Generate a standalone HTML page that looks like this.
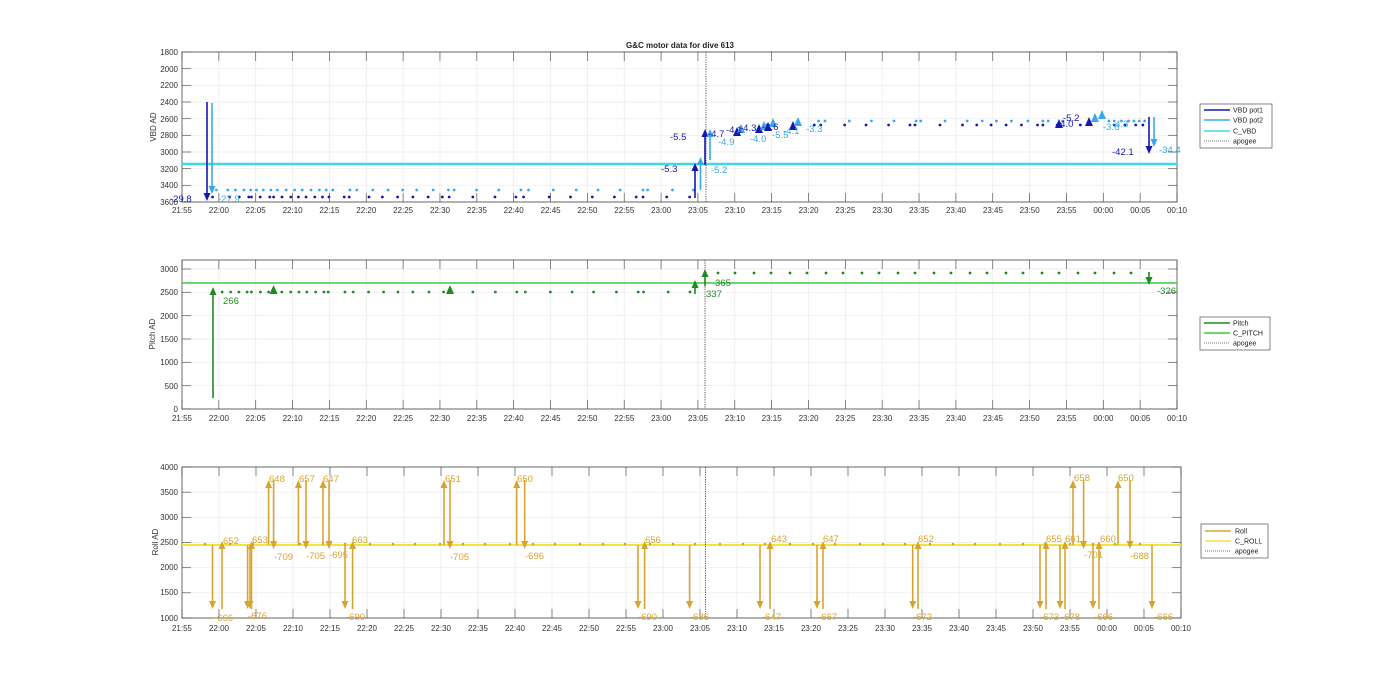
<!DOCTYPE html>
<html><head><meta charset="utf-8"><style>
html,body{margin:0;padding:0;background:#fff;width:1400px;height:693px;overflow:hidden}
svg{display:block;font-family:"Liberation Sans",sans-serif}
.t{font-size:8px;fill:#333}
.l{font-size:9.5px}
</style></head><body>
<svg id="s" width="1400" height="693" viewBox="0 0 1400 693" xmlns="http://www.w3.org/2000/svg">
<rect width="1400" height="693" fill="#fff"/>
<g id="grid"></g>
<g id="data"></g>
<text x="680" y="48" text-anchor="middle" font-size="8" font-weight="bold" fill="#222">G&amp;C motor data for dive 613</text>
<text class="t" transform="translate(156,127) rotate(-90)" text-anchor="middle" font-size="8.5">VBD AD</text>
<text class="t" transform="translate(155,334) rotate(-90)" text-anchor="middle" font-size="8.5">Pitch AD</text>
<text class="t" transform="translate(158,542) rotate(-90)" text-anchor="middle" font-size="8.5">Roll AD</text>
<g class="t" text-anchor="end">
<text x="178" y="55">1800</text><text x="178" y="72">2000</text><text x="178" y="88">2200</text><text x="178" y="105">2400</text><text x="178" y="122">2600</text><text x="178" y="138">2800</text><text x="178" y="155">3000</text><text x="178" y="172">3200</text><text x="178" y="188">3400</text><text x="178" y="205">3600</text>
<text x="178" y="272">3000</text><text x="178" y="295">2500</text><text x="178" y="319">2000</text><text x="178" y="342">1500</text><text x="178" y="365">1000</text><text x="178" y="389">500</text><text x="178" y="412">0</text>
<text x="178" y="470">4000</text><text x="178" y="495">3500</text><text x="178" y="520">3000</text><text x="178" y="545">2500</text><text x="178" y="570">2000</text><text x="178" y="595">1500</text><text x="178" y="621">1000</text>
</g>
<text class="t" y="213" text-anchor="middle"><tspan x="182">21:55</tspan><tspan x="218.9">22:00</tspan><tspan x="255.7">22:05</tspan><tspan x="292.6">22:10</tspan><tspan x="329.4">22:15</tspan><tspan x="366.3">22:20</tspan><tspan x="403.1">22:25</tspan><tspan x="440">22:30</tspan><tspan x="476.9">22:35</tspan><tspan x="513.7">22:40</tspan><tspan x="550.6">22:45</tspan><tspan x="587.4">22:50</tspan><tspan x="624.3">22:55</tspan><tspan x="661.1">23:00</tspan><tspan x="698">23:05</tspan><tspan x="734.9">23:10</tspan><tspan x="771.7">23:15</tspan><tspan x="808.6">23:20</tspan><tspan x="845.4">23:25</tspan><tspan x="882.3">23:30</tspan><tspan x="919.1">23:35</tspan><tspan x="956">23:40</tspan><tspan x="992.9">23:45</tspan><tspan x="1029.7">23:50</tspan><tspan x="1066.6">23:55</tspan><tspan x="1103.4">00:00</tspan><tspan x="1140.3">00:05</tspan><tspan x="1177">00:10</tspan></text>
<text class="t" y="421" text-anchor="middle"><tspan x="182">21:55</tspan><tspan x="218.9">22:00</tspan><tspan x="255.7">22:05</tspan><tspan x="292.6">22:10</tspan><tspan x="329.4">22:15</tspan><tspan x="366.3">22:20</tspan><tspan x="403.1">22:25</tspan><tspan x="440">22:30</tspan><tspan x="476.9">22:35</tspan><tspan x="513.7">22:40</tspan><tspan x="550.6">22:45</tspan><tspan x="587.4">22:50</tspan><tspan x="624.3">22:55</tspan><tspan x="661.1">23:00</tspan><tspan x="698">23:05</tspan><tspan x="734.9">23:10</tspan><tspan x="771.7">23:15</tspan><tspan x="808.6">23:20</tspan><tspan x="845.4">23:25</tspan><tspan x="882.3">23:30</tspan><tspan x="919.1">23:35</tspan><tspan x="956">23:40</tspan><tspan x="992.9">23:45</tspan><tspan x="1029.7">23:50</tspan><tspan x="1066.6">23:55</tspan><tspan x="1103.4">00:00</tspan><tspan x="1140.3">00:05</tspan><tspan x="1177">00:10</tspan></text>
<text class="t" y="631" text-anchor="middle"><tspan x="182">21:55</tspan><tspan x="219">22:00</tspan><tspan x="256">22:05</tspan><tspan x="293">22:10</tspan><tspan x="330">22:15</tspan><tspan x="367">22:20</tspan><tspan x="404">22:25</tspan><tspan x="441">22:30</tspan><tspan x="478">22:35</tspan><tspan x="515">22:40</tspan><tspan x="552">22:45</tspan><tspan x="589">22:50</tspan><tspan x="626">22:55</tspan><tspan x="663">23:00</tspan><tspan x="700">23:05</tspan><tspan x="737">23:10</tspan><tspan x="774">23:15</tspan><tspan x="811">23:20</tspan><tspan x="848">23:25</tspan><tspan x="885">23:30</tspan><tspan x="922">23:35</tspan><tspan x="959">23:40</tspan><tspan x="996">23:45</tspan><tspan x="1033">23:50</tspan><tspan x="1070">23:55</tspan><tspan x="1107">00:00</tspan><tspan x="1144">00:05</tspan><tspan x="1181">00:10</tspan></text>

<g class="l">
<text x="170" y="202" fill="#1418b0">-29.8</text>
<text x="218" y="202" fill="#3aa8e8">-27.9</text>
<text x="661" y="172" fill="#1418b0">-5.3</text>
<text x="711" y="173" fill="#3aa8e8">-5.2</text>
<text x="670" y="140" fill="#1418b0">-5.5</text>
<text x="708" y="137" fill="#1418b0">-4.7</text>
<text x="718" y="145" fill="#3aa8e8">-4.9</text>
<text x="726" y="133" fill="#1418b0">-4.1</text>
<text x="740" y="131" fill="#1418b0">-4.3</text>
<text x="750" y="142" fill="#3aa8e8">-4.0</text>
<text x="762" y="130" fill="#1418b0">-3.6</text>
<text x="772" y="138" fill="#3aa8e8">-5.5</text>
<text x="783" y="134" fill="#3aa8e8">-4.1</text>
<text x="806" y="132" fill="#3aa8e8">-3.3</text>
<text x="1057" y="127" fill="#1418b0">-4.0</text>
<text x="1063" y="121" fill="#1418b0">-5.2</text>
<text x="1103" y="130" fill="#3aa8e8">-3.6</text>
<text x="1112" y="127" fill="#3aa8e8">-4.3</text>
<text x="1112" y="155" fill="#1418b0">-42.1</text>
<text x="1159" y="153" fill="#3aa8e8">-34.4</text>
</g>
<g class="l" fill="#1f8a1f">
<text x="223" y="304">266</text>
<text x="706" y="297">337</text>
<text x="715" y="286">365</text>
<text x="1157" y="294">-326</text>
</g>
<g class="l" fill="#d6a531">
<text x="214" y="621">-666</text><text x="223" y="544">652</text>
<text x="248" y="619">-676</text><text x="252" y="543">653</text>
<text x="269" y="482">648</text><text x="274" y="560">-709</text>
<text x="299" y="482">657</text><text x="306" y="559">-705</text>
<text x="323" y="482">647</text><text x="329" y="558">-695</text>
<text x="346" y="620">-690</text><text x="352" y="543">663</text>
<text x="445" y="482">651</text><text x="450" y="560">-705</text>
<text x="517" y="482">650</text><text x="525" y="559">-696</text>
<text x="638" y="620">-690</text><text x="645" y="543">656</text>
<text x="690" y="620">-686</text>
<text x="762" y="620">-647</text><text x="771" y="542">643</text>
<text x="818" y="620">-667</text><text x="823" y="542">647</text>
<text x="913" y="620">-672</text><text x="918" y="542">652</text>
<text x="1040" y="620">-673</text><text x="1046" y="542">655</text>
<text x="1061" y="620">-678</text><text x="1065" y="542">661</text>
<text x="1074" y="481">658</text><text x="1084" y="558">-701</text>
<text x="1094" y="620">-666</text><text x="1100" y="542">660</text>
<text x="1118" y="481">650</text><text x="1130" y="559">-688</text>
<text x="1154" y="620">-666</text>
</g>
<g font-size="7" fill="#222">
<rect x="1200" y="104" width="72" height="44" fill="#fff" stroke="#333" stroke-width="0.6"/>
<line x1="1204" y1="110" x2="1230" y2="110" stroke="#1418b0" stroke-width="1.5"/><text x="1233" y="112.5">VBD pot1</text>
<line x1="1204" y1="120" x2="1230" y2="120" stroke="#3aa8e8" stroke-width="1.5"/><text x="1233" y="122.5">VBD pot2</text>
<line x1="1204" y1="131" x2="1230" y2="131" stroke="#40d8e8" stroke-width="1.5"/><text x="1233" y="133.5">C_VBD</text>
<line x1="1204" y1="141" x2="1230" y2="141" stroke="#444" stroke-width="0.8" stroke-dasharray="1,1"/><text x="1233" y="143.5">apogee</text>
<rect x="1200" y="317" width="70" height="33" fill="#fff" stroke="#333" stroke-width="0.6"/>
<line x1="1204" y1="323" x2="1230" y2="323" stroke="#1f8a1f" stroke-width="1.5"/><text x="1233" y="325.5">Pitch</text>
<line x1="1204" y1="333" x2="1230" y2="333" stroke="#3ccc3c" stroke-width="1.5"/><text x="1233" y="335.5">C_PITCH</text>
<line x1="1204" y1="343" x2="1230" y2="343" stroke="#444" stroke-width="0.8" stroke-dasharray="1,1"/><text x="1233" y="345.5">apogee</text>
<rect x="1201" y="524" width="67" height="34" fill="#fff" stroke="#333" stroke-width="0.6"/>
<line x1="1205" y1="531" x2="1231" y2="531" stroke="#d6a531" stroke-width="1.5"/><text x="1235" y="533.5">Roll</text>
<line x1="1205" y1="541" x2="1231" y2="541" stroke="#f2e43c" stroke-width="1.5"/><text x="1235" y="543.5">C_ROLL</text>
<line x1="1205" y1="551" x2="1231" y2="551" stroke="#444" stroke-width="0.8" stroke-dasharray="1,1"/><text x="1235" y="553.5">apogee</text>
</g>
</svg>
<script>
(function(){
var NS="http://www.w3.org/2000/svg",G=document.getElementById('grid'),D=document.getElementById('data');
function el(p,n,a){var e=document.createElementNS(NS,n);for(var k in a)e.setAttribute(k,a[k]);p.appendChild(e);return e;}
function ln(p,x1,y1,x2,y2,c,w,extra){var a={x1:x1,y1:y1,x2:x2,y2:y2,stroke:c,'stroke-width':w};for(var k in extra)a[k]=extra[k];return el(p,'line',a);}
var axes=[{l:182,r:1177,t:52,b:202,ys:[52,68.7,85.3,102,118.7,135.3,152,168.7,185.3,202]},
{l:182,r:1177,t:260,b:409,ys:[269,292.3,315.7,339,362.3,385.7,409]},
{l:182,r:1181,t:467,b:618,ys:[467,492.2,517.3,542.5,567.7,592.8,618]}];
axes.forEach(function(a){
 var st=(a.r-a.l)/27;
 for(var i=1;i<27;i++){var x=a.l+i*st;ln(G,x,a.t,x,a.b,'#e9e9e9',0.7);}
 a.ys.forEach(function(y){ln(G,a.l,y,a.r,y,'#e9e9e9',0.7);});
 for(var i=0;i<=27;i++){var x=a.l+i*st;ln(G,x,a.b,x,a.b-9,'#555',0.7);ln(G,x,a.t,x,a.t+9,'#555',0.7);}
 a.ys.forEach(function(y){ln(G,a.l,y,a.l+9,y,'#555',0.7);ln(G,a.r,y,a.r-9,y,'#555',0.7);});
 el(G,'rect',{x:a.l,y:a.t,width:a.r-a.l,height:a.b-a.t,fill:'none',stroke:'#444','stroke-width':0.8});
});
function arrow(x,y1,y2,c){var up=y2<y1;ln(D,x,y1,x,y2+(up?5:-5),c,1.6);
 var h=up?8:-8;el(D,'polygon',{points:(x-3.5)+','+(y2+h)+' '+(x+3.5)+','+(y2+h)+' '+x+','+y2,fill:c});}
function tri(x,y,c){el(D,'polygon',{points:(x-4)+','+(y+4)+' '+(x+4)+','+(y+4)+' '+x+','+(y-5),fill:c});}
function dot(x,y,c,r){el(D,'circle',{cx:x,cy:y,r:r||1.4,fill:c});}
var NV='#1418b0',LB='#3aa8e8',CY='#40d8e8',DG='#1f8a1f',LG='#3ccc3c',GD='#d6a531',YL='#f2e43c';
ln(D,182,164,1177,164,CY,2.5);
[190,235,260,285,292,315,340,350,372,395,415,435,458,478,495,535,548,600,635,675,715,755,792,810,872,930,985,1005,1072,1128,1185,1243,1300,1318,1380,1440].forEach(function(z){dot(140+z/2.62,197,NV);});
[200,230,250,272,290,305,323,343,360,383,405,425,448,470,488,505,550,568,610,650,688,725,768,808,823,882,940,998,1018,1083,1143,1200,1258,1318,1330,1395,1450].forEach(function(z){dot(140+z/2.62,190,LB);});
[460,478,545,605,668,728,742,812,875,915,955,997,1040,1085,1100,1140,1205,1300,1330,1360,1380].forEach(function(z){dot(650+z/2.8,125,NV);});
[472,490,558,620,683,745,758,826,888,930,970,1012,1058,1100,1115,1155,1285,1300,1320,1340,1355,1370,1385].forEach(function(z){dot(650+z/2.8,121,LB);});
ln(D,706,52,706,202,'#444',0.9,{'stroke-dasharray':'1.2,1.2'});
arrow(207,102,201,NV);arrow(212,103,194,LB);
arrow(695,198,163,NV);arrow(700.5,190,157,LB);arrow(705,165,129,NV);arrow(710,160,129,LB);
tri(737,132,NV);tri(741,129,LB);tri(759,129,NV);tri(764,126,LB);tri(768,127,NV);tri(773,123,LB);tri(793,126,NV);tri(798,122,LB);
tri(1059,124,NV);tri(1089,122,NV);tri(1095,118,LB);tri(1102,115,LB);
arrow(1149,117,154,NV);arrow(1154,117,147,LB);
ln(D,182,283,1177,283,LG,1.5);
ln(D,705,260,705,409,'#444',0.9,{'stroke-dasharray':'1.2,1.2'});
[118,142,165,188,200,225,248,285,310,333,355,380,403,415,462,485,528,570,610,652,697,738,820,883,943,967,1037,1098,1158,1222,1283,1298,1367,1428].forEach(function(z){dot(180+z/2.8,292,DG);});
for(var x=718;x<1145;x+=13+((x*7)%9)){dot(x,273,DG);}
arrow(213,398,287,DG);tri(273.6,290,DG);tri(450,290,DG);
arrow(695,294,280,DG);arrow(705,286,269,DG);arrow(1149,272,285,DG);
ln(D,182,545,1181,545,YL,2);
for(var x=205;x<1160;x+=19+((x*3)%7)){dot(x,544,'#c9a040',1.2);}
ln(D,705.5,467,705.5,618,'#444',0.9,{'stroke-dasharray':'1.2,1.2'});
[212.5,247.6,250,345,638,689.6,760,817,912.7,1040,1060,1093,1152].forEach(function(x){arrow(x,545,609,GD);});
[222,251.5,352.6,644.6,770,823,918,1046,1065,1099].forEach(function(x){arrow(x,609,541,GD);});
[268.6,298.4,323,444,516.7,1073,1118].forEach(function(x){arrow(x,545,480,GD);});
[273.6,306,329,450,524.7,1083.6,1130].forEach(function(x){arrow(x,480,549,GD);});
})();
</script>
</body></html>
